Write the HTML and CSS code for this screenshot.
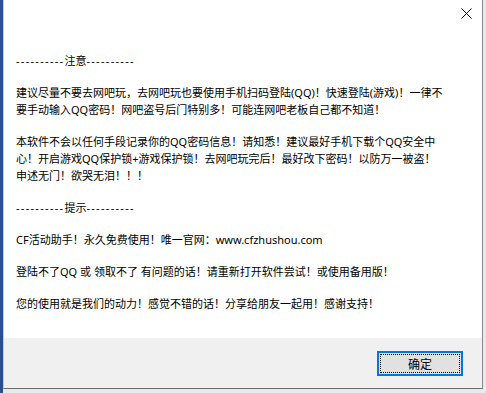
FILE: index.html
```html
<!DOCTYPE html>
<html lang="zh-CN">
<head>
<meta charset="utf-8">
<title>提示</title>
<link rel="stylesheet" href="styles.css">
</head>
<body>
<div class="desktop">
  <div class="dialog">
    <div class="main">
      <div class="titlebar">
        <span class="close">
          <svg width="11" height="11" viewBox="0 0 11 11"><path d="M0.5 0.5 L10.5 10.5 M10.5 0.5 L0.5 10.5" stroke="#000" stroke-width="1" fill="none"/></svg>
        </span>
      </div>
      <div class="message">
        <p><span class="dash">----------</span>注意<span class="dash">----------</span></p>
        <p>建议尽量不要去网吧玩，去网吧玩也要使用手机扫码登陆(QQ)！快速登陆(游戏)！一律不<br>要手动输入QQ密码！网吧盗号后门特别多！可能连网吧老板自己都不知道！</p>
        <p>本软件不会以任何手段记录你的QQ密码信息！请知悉！建议最好手机下载个QQ安全中<br>心！开启游戏QQ保护锁+游戏保护锁！去网吧玩完后！最好改下密码！以防万一被盗！<br>申述无门！欲哭无泪！！！</p>
        <p><span class="dash">----------</span>提示<span class="dash">----------</span></p>
        <p>CF活动助手！永久免费使用！唯一官网：www.cfzhushou.com</p>
        <p>登陆不了QQ 或 领取不了 有问题的话！请重新打开软件尝试！或使用备用版！</p>
        <p>您的使用就是我们的动力！感觉不错的话！分享给朋友一起用！感谢支持！</p>
      </div>
    </div>
    <div class="footer">
      <button class="btn"><span class="focus">确定</span></button>
    </div>
  </div>
</div>
</body>
</html>
```

FILE: styles.css
```css
html, body {
  margin: 0;
  padding: 0;
}
body {
  width: 486px;
  height: 393px;
  overflow: hidden;
  background: #e9ecf1;
  font-family: "Noto Sans", "Noto Sans CJK SC", sans-serif;
}
.desktop {
  display: flex;
  height: 393px;
  background: linear-gradient(to right, #2a4f8f 0, #2a4f8f 3px, #e6e9ee 3px);
}
.dialog {
  margin-left: 3px;
  width: 480px;
  height: 389px;
  border-right: 1px solid #8a8a8a;
  border-bottom: 1px solid #6e6e6e;
  border-left: 1px solid #c9c9c9;
  box-sizing: border-box;
  display: flex;
  flex-direction: column;
  background: #fff;
}
.main {
  height: 338px;
  background: #fff;
}
.titlebar {
  height: 30px;
  display: flex;
  justify-content: flex-end;
  align-items: flex-start;
}
.close {
  width: 11px;
  height: 11px;
  margin-top: 8px;
  margin-right: 10px;
  display: flex;
}
.message {
  padding: 22px 0 0 12px;
  font-size: 11px;
  line-height: 17px;
  color: #000;
}
.message p {
  margin: 0 0 15px 0;
  white-space: nowrap;
}
.dash {
  letter-spacing: 1.3px;
}
.footer {
  flex: 1;
  background: #f0f0f0;
  display: flex;
  justify-content: flex-end;
  align-items: flex-start;
  padding: 13px 19px 0 0;
}
.btn {
  width: 86px;
  height: 25px;
  background: #e1e1e1;
  border: 2px solid #0078d7;
  padding: 1px;
  margin: 0;
  display: flex;
  box-sizing: border-box;
  font-family: "Noto Sans CJK SC", sans-serif;
  font-size: 12px;
  color: #000;
}
.focus {
  flex: 1;
  border: 1px dotted #000;
  display: flex;
  align-items: center;
  justify-content: center;
  line-height: 1;
}
```
